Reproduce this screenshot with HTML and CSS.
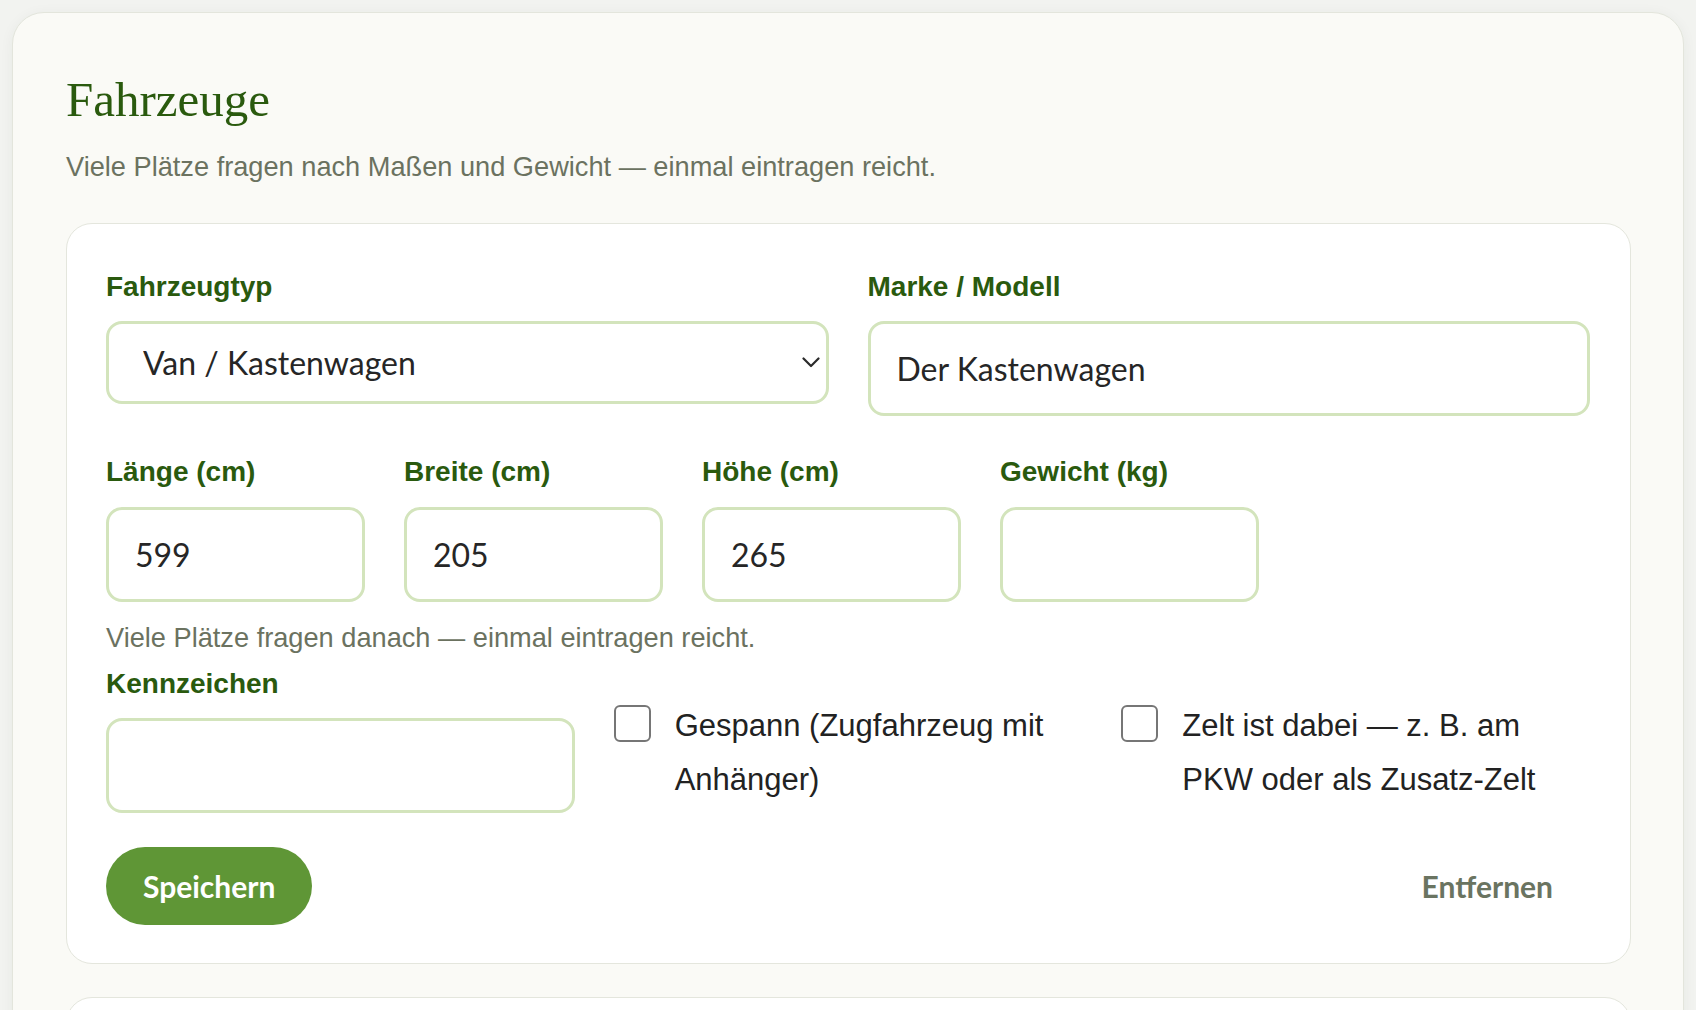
FILE: index.html
```html
<!DOCTYPE html>
<html lang="de">
<head>
<meta charset="utf-8">
<title>Fahrzeuge</title>
<link rel="stylesheet" href="styles.css">
</head>
<body>
<div class="page">
  <section class="panel">
    <h1 class="title">Fahrzeuge</h1>
    <p class="subtitle">Viele Plätze fragen nach Maßen und Gewicht — einmal eintragen reicht.</p>

    <form class="vehicle-card">
      <div class="row-two">
        <div class="field">
          <label class="label">Fahrzeugtyp</label>
          <div class="select-wrap">
            <select class="select">
              <option>Van / Kastenwagen</option>
            </select>
            <svg class="chevron" width="18" height="11" viewBox="0 0 18 11"><path d="M1.5 1.5 L9 9 L16.5 1.5" fill="none" stroke="#2b2b2b" stroke-width="2.2" stroke-linecap="round" stroke-linejoin="round"/></svg>
          </div>
        </div>
        <div class="field">
          <label class="label">Marke / Modell</label>
          <input class="input input-tall" type="text" value="Der Kastenwagen">
        </div>
      </div>

      <div class="row-four">
        <div class="field">
          <label class="label">Länge (cm)</label>
          <input class="input" type="text" value="599">
        </div>
        <div class="field">
          <label class="label">Breite (cm)</label>
          <input class="input" type="text" value="205">
        </div>
        <div class="field">
          <label class="label">Höhe (cm)</label>
          <input class="input" type="text" value="265">
        </div>
        <div class="field">
          <label class="label">Gewicht (kg)</label>
          <input class="input" type="text" value="">
        </div>
      </div>

      <p class="hint">Viele Plätze fragen danach — einmal eintragen reicht.</p>

      <div class="row-three">
        <div class="field">
          <label class="label label-tight">Kennzeichen</label>
          <input class="input input-plate" type="text" value="">
        </div>
        <label class="check">
          <input class="box" type="checkbox">
          <span class="check-text">Gespann (Zugfahrzeug mit Anhänger)</span>
        </label>
        <label class="check">
          <input class="box" type="checkbox">
          <span class="check-text">Zelt ist dabei — z. B. am PKW oder als Zusatz-Zelt</span>
        </label>
      </div>

      <div class="actions">
        <button type="button" class="btn btn-primary">Speichern</button>
        <button type="button" class="btn btn-ghost">Entfernen</button>
      </div>
    </form>

    <div class="vehicle-card vehicle-card-next"></div>
  </section>
</div>
</body>
</html>
```

FILE: styles.css
```css
* { box-sizing: border-box; }

html, body {
  margin: 0;
  padding: 0;
  background: #f2f3f0;
  font-family: "Liberation Sans", Arial, sans-serif;
}

.page {
  padding: 12px 12px 0 12px;
}

.panel {
  background: #fafaf6;
  border: 1.5px solid #e3e5dc;
  border-radius: 32px;
  padding: 58px 52px 40px 53px;
  box-shadow: 0 2px 14px rgba(40, 50, 30, 0.05);
}

.title {
  margin: 0;
  font-family: "Liberation Serif", "Times New Roman", serif;
  font-weight: 400;
  font-size: 49px;
  line-height: 58px;
  color: #2a5a0e;
}

.subtitle {
  margin: 22px 0 0 0;
  font-size: 27.2px;
  line-height: 31px;
  color: #6b7260;
}

.vehicle-card {
  display: block;
  margin: 41px 0 0 0;
  background: #ffffff;
  border: 1.5px solid #e4e6dd;
  border-radius: 26px;
  padding: 47px 40px 38px 39px;
}

.vehicle-card-next {
  margin-top: 33px;
  height: 300px;
}

.field {
  display: flex;
  flex-direction: column;
  min-width: 0;
}

.label {
  font-weight: 700;
  font-size: 28px;
  line-height: 32px;
  color: #2a5a0e;
  margin-bottom: 18px;
}

.label-tight {
  margin-bottom: 18px;
}

.row-two {
  display: grid;
  grid-template-columns: 1fr 1fr;
  column-gap: 39px;
  align-items: start;
}

.row-four {
  display: grid;
  grid-template-columns: repeat(4, 259px);
  column-gap: 39px;
  margin-top: 40px;
}

.row-four .label {
  margin-bottom: 19px;
}

.row-three {
  display: grid;
  grid-template-columns: 1fr 1fr 1fr;
  column-gap: 39px;
  align-items: start;
  margin-top: 15px;
}

.input,
.select {
  width: 100%;
  border: 3px solid #d3e4bc;
  border-radius: 16px;
  background: #ffffff;
  font-family: Lato, "Liberation Sans", sans-serif;
  font-size: 32px;
  color: #262626;
  outline: none;
}

.input {
  height: 95px;
  padding: 0 26px;
}

.input-tall {
  height: 95px;
}

.input-plate {
  height: 95px;
}

.select-wrap {
  position: relative;
}

.select {
  -webkit-appearance: none;
  appearance: none;
  height: 83px;
  padding: 0 40px 0 34px;
}

.chevron {
  position: absolute;
  right: 9px;
  top: 36px;
  pointer-events: none;
}

.hint {
  margin: 20px 0 0 0;
  font-size: 27.2px;
  line-height: 31px;
  color: #6b7260;
}

.check {
  display: flex;
  align-items: flex-start;
  padding-top: 31px;
  cursor: pointer;
}

.box {
  -webkit-appearance: none;
  appearance: none;
  flex: 0 0 auto;
  width: 37px;
  height: 37px;
  margin: 6px 24px 0 0;
  border: 2px solid #767676;
  border-radius: 6px;
  background: #ffffff;
}

.check-text {
  font-size: 31px;
  line-height: 54px;
  color: #222222;
}

.actions {
  display: flex;
  justify-content: space-between;
  align-items: center;
  margin-top: 34px;
}

.btn {
  height: 78px;
  padding: 0 37px;
  border: none;
  border-radius: 40px;
  font-family: Lato, "Liberation Sans", sans-serif;
  font-weight: 700;
  font-size: 30px;
  cursor: pointer;
}

.btn-primary {
  background: #5f9636;
  color: #ffffff;
}

.btn-ghost {
  background: transparent;
  color: #6a7461;
}
```
